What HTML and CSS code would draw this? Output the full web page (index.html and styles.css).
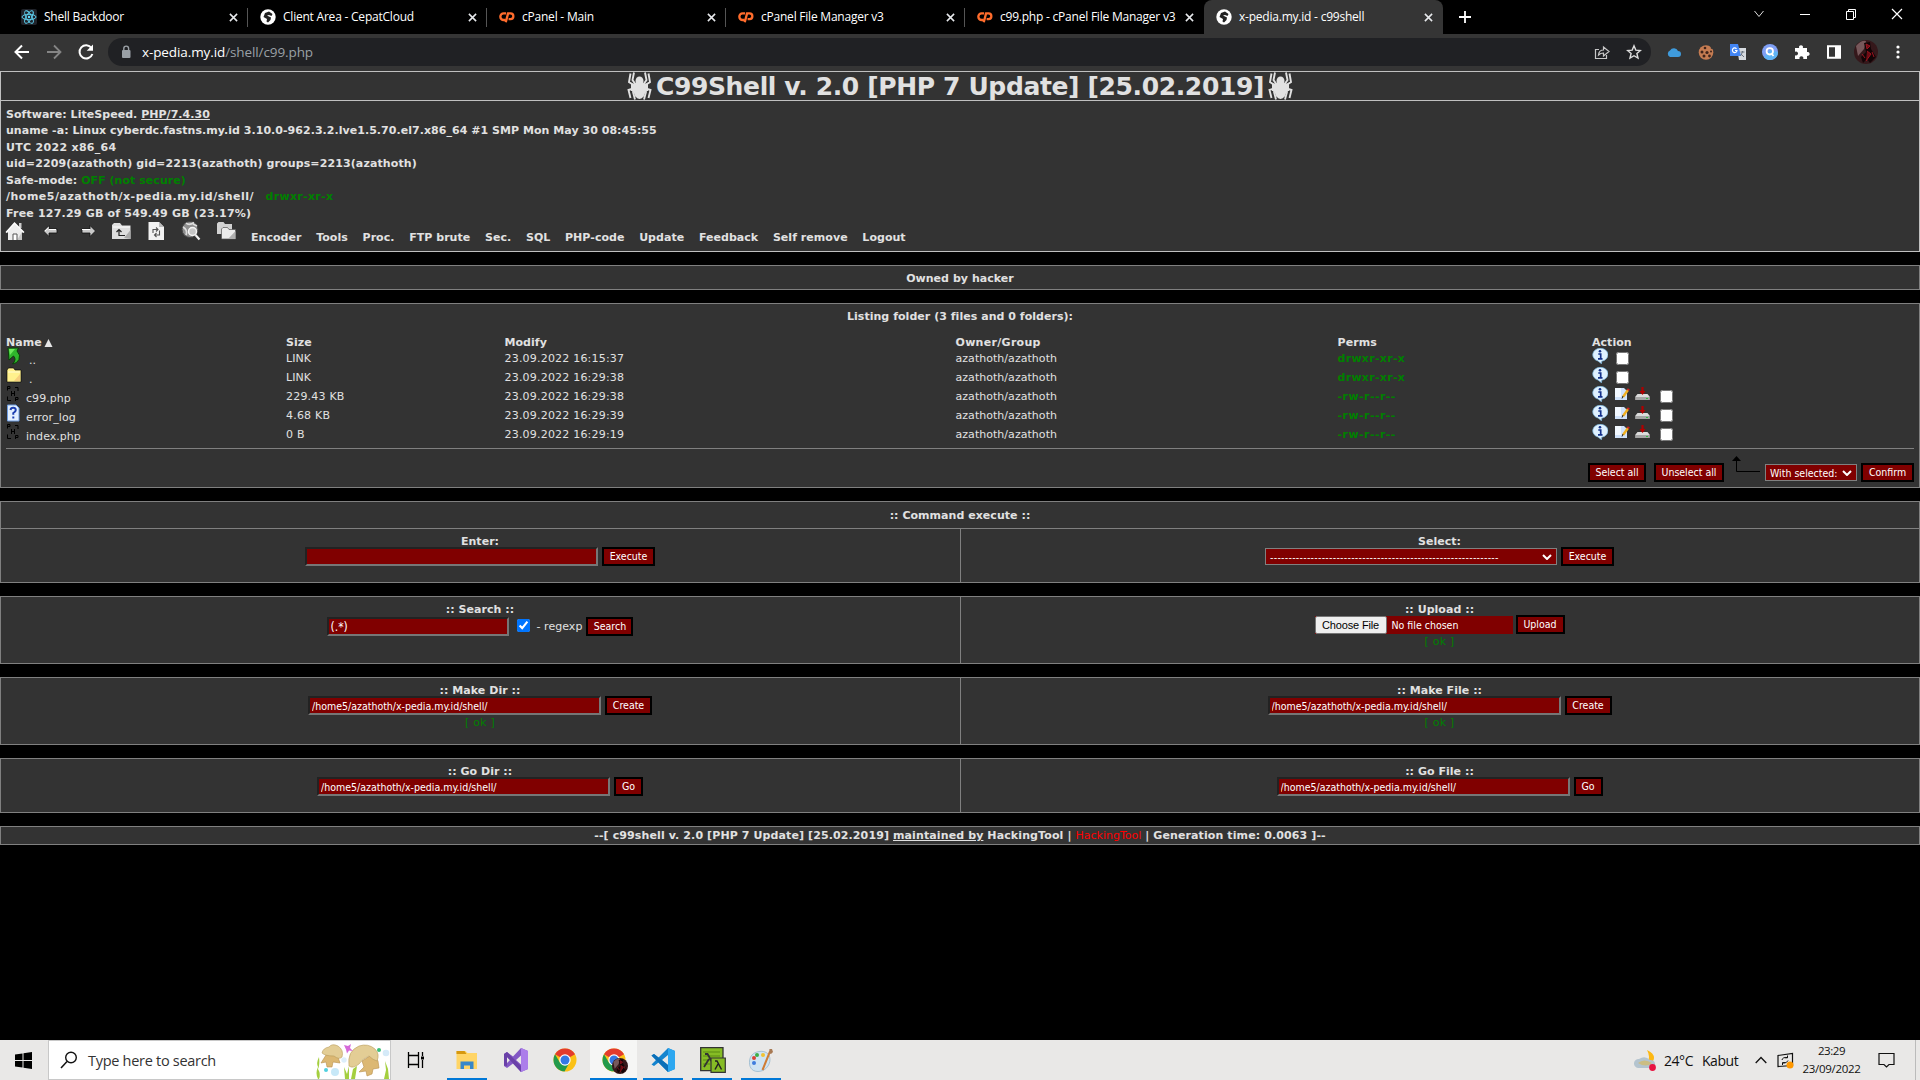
FILE: index.html
```html
<!DOCTYPE html>
<html lang="en">
<head>
<meta charset="utf-8">
<title>x-pedia.my.id - c99shell</title>
<link rel="stylesheet" href="styles.css">
</head>
<body>
<svg class="defs" aria-hidden="true">
  <symbol id="cp" viewBox="0 0 18 14"><path d="M8 3H5.2a3.3 3.3 0 0 0 0 7.4H7M7.600 13l2.600-10H13a3 3 0 0 1 0 6.300h-2.200" fill="none" stroke="#ff6c2c" stroke-width="2.600"/></symbol>
  <symbol id="globe" viewBox="0 0 16 16"><circle cx="8" cy="8" r="7.700" fill="#fff"/><path d="M5 4l4-1.500 3.500 2.500-1 2-2.500-1-2 .500 4 2-.500 2.500-2.500 2.500-1.500-1 .500-2.500-3.500-2z" fill="#222"/></symbol>
  <symbol id="x" viewBox="0 0 10 10"><path d="M1 1l8 8M9 1L1 9" stroke="#e8eaed" stroke-width="1.700"/></symbol>
  <symbol id="spider" viewBox="0 0 25 28"><g fill="none" stroke="#e1e1e1" stroke-width="1.900"><path d="M9 13L5.500 8 7 .5M8 14L2 10 3.500 1.500M8 16L1.500 18 3.500 26M9 18L6 20 8 27.500M16 13l3.500-5L18 .5M17 14l6-4-1.500-8.500M17 16l6.500 2-2 8M16 18l3 2-2 7.500"/></g><ellipse cx="12.500" cy="9" rx="4" ry="4.500" fill="#e1e1e1"/><ellipse cx="12.500" cy="18" rx="6" ry="9" fill="#e1e1e1"/><path d="M4 11.500h17v7.500H4z" fill="#e1e1e1"/></symbol>
  <symbol id="php" viewBox="0 0 14 18"><path d="M1.500 5.500v-4h2.500v2h-2.500M9 2.500h3V6M5.500 6v5M8.500 6v5M5.500 8.500h3M1.500 11.500v4H5M9.500 16v-3.500h2.500v2h-2.500" fill="none" stroke="#000"/></symbol>
  <symbol id="info" viewBox="0 0 16 16"><path d="M8 .3a7.500 6.500 0 0 1 1.700 12.900L9.500 15.800 6 13A7.500 6.500 0 0 1 8 .3z" fill="#dff1ff" stroke="#7db7e0" stroke-width=".7"/><path d="M6.300 6h2.400v4.500M6 10.800h4.500" fill="none" stroke="#12308a" stroke-width="1.700"/><circle cx="8" cy="3.300" r="1.300" fill="#12308a"/></symbol>
  <symbol id="edit" viewBox="0 0 16 14"><path d="M1 1h9l3 3v9H1z" fill="#cfe2fb"/><path d="M1 1h6v9H1z" fill="#f2f8ff"/><path d="M14 3l-5 7" stroke="#f0b020" stroke-width="2.400"/><path d="M14.800 1.800l-1 1.500" stroke="#c22" stroke-width="2.400"/><path d="M9 9l-1 2.500" stroke="#222"/></symbol>
  <symbol id="down" viewBox="0 0 15 14"><path d="M2.500 7h10l2 2.500v3.500H.5V9.500z" fill="#dcdcdc"/><path d="M.5 10h14v3H.5z" fill="#a5a5a5"/><path d="M11 11.500h2" stroke="#2fbf3f"/><path d="M7.500 0v5" stroke="#b00000" stroke-width="2.200"/><path d="M4.500 4h6L7.500 8z" fill="#b00000"/></symbol>
  <symbol id="chev" viewBox="0 0 10 6"><path d="M1 1l4 4 4-4" fill="none" stroke="#fff" stroke-width="2"/></symbol>
  <symbol id="chrome" viewBox="0 0 24 24"><circle cx="12" cy="12" r="11.500" fill="#fbc116"/><path d="M12 12L2 6.300A11.500 11.500 0 0 1 22 6.300z" fill="#e33b2e"/><path d="M2 6.300A11.500 11.500 0 0 0 11.500 23.500L16.500 14.500 7 14.800z" fill="#229a4b"/><circle cx="12" cy="12" r="5.700" fill="#fff"/><circle cx="12" cy="12" r="4.500" fill="#3578e5"/></symbol>
  <symbol id="avatar" viewBox="0 0 24 24"><circle cx="12" cy="12" r="12" fill="#35181b"/><path d="M2 6q5-6 10-5l-2 8-6 7z" fill="#77585b"/><path d="M10 3l6-1 1 7 5 8-6 6-3-4-4 4-2-6 5-5z" fill="#120406"/><path d="M12 4l4 2-3 3zM13 11l4 3-5 7M18 12l2 5M8 14l3 4" stroke="#9c1420" fill="#6d0c14"/></symbol>
</svg>

<header class="browser">
  <div class="tabs">
    <div class="tab"><svg class="fav" viewBox="0 0 16 16"><rect width="16" height="16" rx="2" fill="#20232a"/><g fill="none" stroke="#61dafb" stroke-width=".9"><ellipse cx="8" cy="8" rx="7" ry="2.700"/><ellipse cx="8" cy="8" rx="7" ry="2.700" transform="rotate(60 8 8)"/><ellipse cx="8" cy="8" rx="7" ry="2.700" transform="rotate(120 8 8)"/></g><circle cx="8" cy="8" r="1.200" fill="#61dafb"/></svg><span class="t">Shell Backdoor</span><svg class="cl"><use href="#x"/></svg></div>
    <div class="tab"><svg class="fav"><use href="#globe"/></svg><span class="t">Client Area - CepatCloud</span><svg class="cl"><use href="#x"/></svg></div>
    <div class="tab"><svg class="fav"><use href="#cp"/></svg><span class="t">cPanel - Main</span><svg class="cl"><use href="#x"/></svg></div>
    <div class="tab"><svg class="fav"><use href="#cp"/></svg><span class="t">cPanel File Manager v3</span><svg class="cl"><use href="#x"/></svg></div>
    <div class="tab nosep"><svg class="fav"><use href="#cp"/></svg><span class="t">c99.php - cPanel File Manager v3</span><svg class="cl"><use href="#x"/></svg></div>
    <div class="tab active"><svg class="fav"><use href="#globe"/></svg><span class="t">x-pedia.my.id - c99shell</span><svg class="cl"><use href="#x"/></svg></div>
    <svg class="plus" viewBox="0 0 12 12"><path d="M6 0v12M0 6h12" stroke="#fff" stroke-width="1.800"/></svg>
    <div class="win">
      <svg viewBox="0 0 12 12"><path d="M1.500 3l4.500 5.500L10.500 3" fill="none" stroke="#ddd"/></svg>
      <svg viewBox="0 0 12 12"><path d="M1 6.500h10" stroke="#fff"/></svg>
      <svg viewBox="0 0 12 12"><path d="M1.500 3.500h7v8h-7zM3.500 3V1.500h7v8H9" fill="none" stroke="#fff"/></svg>
      <svg viewBox="0 0 12 12"><path d="M1 1l10 10M11 1L1 11" stroke="#fff" stroke-width="1.200"/></svg>
    </div>
  </div>
  <div class="toolbar">
    <div class="nav">
      <svg viewBox="0 0 18 18"><path d="M16 9H3M9 2.500L2.500 9 9 15.500" fill="none" stroke="#fff" stroke-width="2"/></svg>
      <svg viewBox="0 0 18 18"><path d="M2 9h13M9 2.500L15.500 9 9 15.500" fill="none" stroke="#858585" stroke-width="1.800"/></svg>
      <svg viewBox="0 0 18 18"><path d="M14.500 5A6.600 6.600 0 1 0 15.400 11" fill="none" stroke="#fff" stroke-width="2"/><path d="M16 1.500v6.300H9.700z" fill="#fff"/></svg>
    </div>
    <div class="omni">
      <svg class="lock" viewBox="0 0 10 14"><rect x="1" y="5" width="8.500" height="8" rx="1" fill="#9aa0a6"/><path d="M2.800 5.500V3.500a2.400 2.400 0 0 1 4.800 0v2" fill="none" stroke="#9aa0a6" stroke-width="1.400"/></svg>
      <span class="url"><b>x-pedia.my.id</b>/shell/c99.php</span>
      <svg class="oi" viewBox="0 0 16 16"><path d="M5 5.500H1.500v9h11V11" fill="none" stroke="#c8c8c8" stroke-width="1.200"/><path d="M4.500 11q.5-5 5-5V3L15 7.500 9.500 12V9q-3 0-5 2z" fill="none" stroke="#c8c8c8" stroke-width="1.200"/></svg>
      <svg class="oi" viewBox="0 0 16 16"><path d="M8 1.800l1.800 4.300 4.600.4-3.500 3 1.100 4.600L8 11.700l-4 2.400 1.100-4.600-3.500-3 4.600-.4z" fill="none" stroke="#ddd" stroke-width="1.400"/></svg>
    </div>
    <div class="ext">
      <svg viewBox="0 0 16 16"><path d="M4 13a3.500 3.500 0 0 1 0-6.500A4.500 4.500 0 0 1 12 7a3 3 0 0 1 0 6z" fill="#3f9bdc"/></svg>
      <svg viewBox="0 0 16 16"><circle cx="8" cy="8.500" r="7.300" fill="#c57c52"/><path d="M12 0h4v4l-3 1z" fill="#353535"/><g fill="#40241b"><circle cx="7" cy="4" r="1.300"/><circle cx="4" cy="8" r="1.500"/><circle cx="9" cy="8.500" r="1.600"/><circle cx="6" cy="12" r="1.500"/><circle cx="11.500" cy="12" r="1.400"/><circle cx="13" cy="7.500" r="1"/></g></svg>
      <svg viewBox="0 0 16 16"><path d="M7 4h9v12H9z" fill="#d7dbe0"/><path d="M0 0h8l3 12H0z" fill="#4285f4"/><path d="M6.500 4.800A2.300 2.300 0 1 0 7 6.500H5" fill="none" stroke="#fff" stroke-width="1.200"/><path d="M10.500 8h4M12.500 7v1l-2 4M11 10l3 3" fill="none" stroke="#6b7580"/></svg>
      <svg viewBox="0 0 16 16"><circle cx="8" cy="8" r="8" fill="#7f9ff5"/><path d="M2 13.300A8 8 0 0 0 16 8L8 6z" fill="#5fb4f5"/><circle cx="7.800" cy="7.300" r="3.200" fill="none" stroke="#fff" stroke-width="1.800"/><path d="M9.500 9.500l2 2.500" stroke="#fff" stroke-width="1.800"/></svg>
      <svg viewBox="0 0 16 16"><path d="M1 4h4.200a2 2 0 1 1 3.600 0H13v4a2 2 0 1 1 0 3.800V15H9.200a2 2 0 1 0-3.600 0H1v-3.800a2 2 0 1 0 0-3.400z" fill="#fff"/></svg>
      <svg viewBox="0 0 16 16"><path d="M2 2.200h12v11.600H2z" fill="none" stroke="#fff" stroke-width="2"/><path d="M9 2h5v12H9z" fill="#fff"/></svg>
      <svg class="ava"><use href="#avatar"/></svg>
      <svg viewBox="0 0 16 16"><g fill="#fff"><circle cx="8" cy="3" r="1.600"/><circle cx="8" cy="8" r="1.600"/><circle cx="8" cy="13" r="1.600"/></g></svg>
    </div>
  </div>
</header>

<main class="page">
  <section class="titlebar"><svg class="spider"><use href="#spider"/></svg><h1>C99Shell v. 2.0 [PHP 7 Update] [25.02.2019]</h1><svg class="spider"><use href="#spider"/></svg></section>
  <section class="info">
    <p>Software: LiteSpeed. <u>PHP/7.4.30</u></p>
    <p>uname -a: Linux cyberdc.fastns.my.id 3.10.0-962.3.2.lve1.5.70.el7.x86_64 #1 SMP Mon May 30 08:45:55</p>
    <p class="ls3">UTC 2022 x86_64</p>
    <p class="ls1">uid=2209(azathoth) gid=2213(azathoth) groups=2213(azathoth)</p>
    <p>Safe-mode: <i>OFF (not secure)</i></p>
    <p><span class="ls5">/home5/azathoth/x-pedia.my.id/shell/</span><i class="perm ls3">drwxr-xr-x</i></p>
    <p class="ls2">Free 127.29 GB of 549.49 GB (23.17%)</p>
    <div class="quick">
      <div class="cell c0"><svg viewBox="0 0 20 20"><path d="M3 10h14v9H3z" fill="#ececec"/><path d="M14 2h2.500v5H14z" fill="#ccc"/><path d="M1 11.500L9.500 2 19 11.500" fill="#eee" stroke="#fff" stroke-width="1.300"/><path d="M12 19l5-8v8z" fill="#c4c4c4"/><path d="M8 19v-6h4v6" fill="#fff" stroke="#555"/></svg></div>
      <div class="cell"><svg viewBox="0 0 20 20"><path d="M2.500 10L8 4.500v3.500h8v4H8v3.500z" fill="#c9c9c9" stroke="#111" stroke-width=".8"/><path d="M4 10l4-3.500M8 8.500h7" stroke="#fff"/></svg></div>
      <div class="cell"><svg viewBox="0 0 20 20"><path d="M19.500 10L14 4.500v3.500H6v4h8v3.500z" fill="#c9c9c9" stroke="#111" stroke-width=".8"/><path d="M6 8.500h8" stroke="#fff"/></svg></div>
      <div class="cell"><svg viewBox="0 0 20 20"><path d="M1 18V4l2-2h6l2 2.500h8.500V18z" fill="#dedede"/><path d="M2 6h17" stroke="#fff"/><path d="M13 17L19.500 9v9z" fill="#aaa"/><path d="M8 8.500v6h6M5.500 11L8 8.500l2.500 2.500" fill="none" stroke="#222" stroke-width="1.200"/></svg></div>
      <div class="cell"><svg viewBox="0 0 20 20"><path d="M2.500 1H13l5 5v13H2.500z" fill="#f2f2f2"/><path d="M13 1v5h5" fill="#bbb"/><path d="M7 12V8.500h5M10 6.500l2 2-2 2M13.500 9.500V14h-5M10.500 12l-2 2 2 2" fill="none" stroke="#555" stroke-width="1.100"/></svg></div>
      <div class="cell"><svg viewBox="0 0 20 20"><circle cx="9" cy="8.500" r="8" fill="#8e8e8e" stroke="#444"/><path d="M2 6q5 3 3 8M5 2q3 3 8-.5M12 3l4 2" fill="none" stroke="#ddd" stroke-width="1.600"/><circle cx="11.500" cy="10.500" r="4" fill="#c6c6c6" stroke="#f4f4f4" stroke-width="1.500"/><path d="M14.500 14l4 4.500" stroke="#f4f4f4" stroke-width="2.200"/></svg></div>
      <div class="cell"><svg viewBox="0 0 20 20"><path d="M1 13V2.500l1.500-1.500h5l1.500 2h7v10z" fill="#d2d2d2"/><path d="M5.500 18V8L7 6.500h4.500L13 8.500h6.500V18z" fill="#ececec" stroke="#555" stroke-width=".7"/><path d="M12 18l7.500-8v8z" fill="#b0b0b0"/></svg></div>
      <nav><a>Encoder</a><a>Tools</a><a>Proc.</a><a>FTP brute</a><a>Sec.</a><a>SQL</a><a>PHP-code</a><a>Update</a><a>Feedback</a><a>Self remove</a><a>Logout</a></nav>
    </div>
  </section>

  <section class="box owned"><b>Owned by hacker</b></section>

  <section class="box listing">
    <h2>Listing folder (3 files and 0 folders):</h2>
    <div class="row head"><span class="nm0"><b>Name</b><svg viewBox="0 0 9 9"><path d="M4.500 0L9 9H0z" fill="#e6e6e6"/></svg></span><b>Size</b><b>Modify</b><b class="ls3">Owner/Group</b><b class="ls1">Perms</b><b>Action</b></div>
    <div class="row"><span class="nm up"><svg viewBox="0 0 16 18"><path d="M2 1h10.500L11 4q4 4 2 8.500-2 4-6.500 4.500 4.500-4.500 1-8L3 13z" fill="#2fb62c" stroke="#0a3d08"/><path d="M3 2h6L4 8z" fill="#6ee85c"/></svg><em>..</em></span><span>LINK</span><span class="ls2">23.09.2022 16:15:37</span><span>azathoth/azathoth</span><i class="ls3">drwxr-xr-x</i><span class="act"><svg><use href="#info"/></svg><input type="checkbox"></span></div>
    <div class="row"><span class="nm up"><svg viewBox="0 0 16 18"><path d="M1 16V4l1.500-2h5L9 4h6v12z" fill="#fff18d" stroke="#000" stroke-width=".6"/><path d="M2 6h12" stroke="#fffbd5"/><path d="M8 15l6-7v7z" fill="#f6cf7d"/></svg><em>.</em></span><span>LINK</span><span class="ls2">23.09.2022 16:29:38</span><span>azathoth/azathoth</span><i class="ls3">drwxr-xr-x</i><span class="act"><svg><use href="#info"/></svg><input type="checkbox"></span></div>
    <div class="row"><span class="nm"><svg><use href="#php"/></svg><em>c99.php</em></span><span class="ls2">229.43 KB</span><span class="ls2">23.09.2022 16:29:38</span><span>azathoth/azathoth</span><i class="ls4">-rw-r--r--</i><span class="act"><svg><use href="#info"/></svg><svg><use href="#edit"/></svg><svg class="dl"><use href="#down"/></svg><input type="checkbox"></span></div>
    <div class="row"><span class="nm"><svg viewBox="0 0 14 18"><path d="M1.500 1H10l3 3v13H1.500z" fill="#e3f0ff" stroke="#6d9be0"/><path d="M4.500 6q.3-2.300 2.700-2.300T9.800 6q0 1.600-2.500 3v1.800M7.300 12.500v2" fill="none" stroke="#1c3fb0" stroke-width="2"/></svg><em class="ls1">error_log</em></span><span class="ls2">4.68 KB</span><span class="ls2">23.09.2022 16:29:39</span><span>azathoth/azathoth</span><i class="ls4">-rw-r--r--</i><span class="act"><svg><use href="#info"/></svg><svg><use href="#edit"/></svg><svg class="dl"><use href="#down"/></svg><input type="checkbox"></span></div>
    <div class="row"><span class="nm"><svg><use href="#php"/></svg><em>index.php</em></span><span class="ls2">0 B</span><span class="ls2">23.09.2022 16:29:19</span><span>azathoth/azathoth</span><i class="ls4">-rw-r--r--</i><span class="act"><svg><use href="#info"/></svg><svg><use href="#edit"/></svg><svg class="dl"><use href="#down"/></svg><input type="checkbox"></span></div>
    <div class="bulk">
      <button class="w58">Select all</button><button class="w70">Unselect all</button>
      <svg class="arrow" viewBox="0 0 28 17"><path d="M4.500 4v11.500H28" fill="none" stroke="#000"/><path d="M0 5L4.500 0 9 5z"/></svg>
      <span class="select w92">With selected:<svg><use href="#chev"/></svg></span><button class="w53">Confirm</button>
    </div>
  </section>

  <section class="box cmd">
    <h2>:: Command execute ::</h2>
    <div class="halves">
      <div class="half"><h3>Enter:</h3><div class="line"><input class="w293"><button class="w53">Execute</button></div></div>
      <div class="half"><h3>Select:</h3><div class="line"><span class="select w292"><span class="dashes">--------------------------------------------------------------</span><svg><use href="#chev"/></svg></span><button class="w53">Execute</button></div></div>
    </div>
  </section>

  <section class="box halves h68">
    <div class="half"><h3>:: Search ::</h3><div class="line search"><input class="w182" value="(.*)"><input type="checkbox" checked><em>- regexp</em><button class="w47">Search</button></div></div>
    <div class="half"><h3>:: Upload ::</h3><div class="line upload"><span class="file"><span class="choose">Choose File</span>No file chosen</span><button class="w49">Upload</button></div><div class="ok">[ ok ]</div></div>
  </section>

  <section class="box halves h68">
    <div class="half"><h3>:: Make Dir ::</h3><div class="line"><input class="w293" value="/home5/azathoth/x-pedia.my.id/shell/"><button class="w47">Create</button></div><div class="ok">[ ok ]</div></div>
    <div class="half"><h3>:: Make File ::</h3><div class="line"><input class="w293" value="/home5/azathoth/x-pedia.my.id/shell/"><button class="w47">Create</button></div><div class="ok">[ ok ]</div></div>
  </section>

  <section class="box halves h55">
    <div class="half"><h3>:: Go Dir ::</h3><div class="line"><input class="w293" value="/home5/azathoth/x-pedia.my.id/shell/"><button class="w29">Go</button></div></div>
    <div class="half"><h3>:: Go File ::</h3><div class="line"><input class="w293" value="/home5/azathoth/x-pedia.my.id/shell/"><button class="w29">Go</button></div></div>
  </section>

  <footer class="box foot"><b>--[ c99shell v. 2.0 [PHP 7 Update] [25.02.2019] <u>maintained by</u> HackingTool | <span class="red">HackingTool</span> | Generation time: 0.0063 ]--</b></footer>
</main>

<footer class="taskbar">
  <div class="start"><svg viewBox="0 0 17 17"><path d="M0 2.500l7.500-1V8H0zM8.500 1.300L17 0v8H8.500zM0 9h7.500v6.500L0 14.500zM8.500 9H17v8l-8.500-1.200z"/></svg></div>
  <div class="find"><svg class="mag" viewBox="0 0 18 18"><circle cx="11" cy="6.500" r="5.300" fill="none" stroke="#111" stroke-width="1.400"/><path d="M7 10.500L1 17" stroke="#111" stroke-width="1.500"/></svg><span>Type here to search</span>
    <svg class="art" viewBox="0 0 78 38"><circle cx="23" cy="31" r="4" fill="#c7e8f8"/><circle cx="14" cy="29" r="2" fill="#4fd0e0"/><circle cx="32" cy="19" r="2.700" fill="#dceefa"/><circle cx="74" cy="12" r="3.300" fill="#d5eaf8"/><circle cx="67" cy="9" r="2" fill="#3bbf78"/><path d="M6 38q-3-6 0-12-2-4 1-10 1 8-1 12 3 5 1 10zM33 38l-1-12 3 7 2-8 0 13zM39 38l2-10 4-3-2 13zM72 38l2-9-1-9 3 8 1 10z" fill="#a4cf3f"/><path d="M14 14l-5 8 5-1 1 5 5 0 1-5 7 1-2-6-5-4z" fill="#dcb873" stroke="#b8904e" stroke-width=".6"/><path d="M50 20l2 6-5 5 7-1 1 5 5-2 1-5 6-1-1-7-5-7z" fill="#dcb873" stroke="#b8904e" stroke-width=".6"/><path d="M17 6Q20 2 26 5q6 4 4 11-3 3-8-1-9 0-12-3 1-5 7-6z" fill="#e3cd95" stroke="#b99c5c" stroke-width=".6"/><path d="M37 25Q35 10 47 5q9-3 16 3 5 5 2 12-4-1-8-5-6 2-10 8-6 5-10 2z" fill="#e3cd95" stroke="#b99c5c" stroke-width=".6"/><path d="M32 4l4 1 3-2-1 4 3 3-4-.5-2 3-1-4z" fill="#d569d8"/></svg>
  </div>
  <div class="app tv"><svg viewBox="0 0 18 18"><path d="M1.500 1v3.500h10V1M1.500 17v-3.500h10V17M1.500 4.500v9M11.500 4.500v9M15.500 1v4M15.500 9v8" fill="none" stroke="#000" stroke-width="1.300"/><path d="M14 5.500h3v3h-3z"/></svg></div>
  <div class="app run"><svg viewBox="0 0 24 24"><path d="M1.500 3h9l2 2H22v16H1.500z" fill="#ffd567"/><path d="M1.500 3h8l2 3H1.500z" fill="#d6980f"/><path d="M5.500 21v-7.500h13V21h-3.500v-3.500H9V21z" fill="#3787c9"/></svg></div>
  <div class="app"><svg viewBox="0 0 24 24"><path fill-rule="evenodd" d="M17 0l7 3v18l-7 3-8-8.500L3 20l-3-2V6l3-2 6 4.500zM17 7.500L12 12l5 4.500zM3 9v6l3-3z" fill="#8257c4"/><path d="M17 0l7 3v18l-7 3z" fill="#ac7eea"/><path d="M0 6l3-2 14 14v6L3 9v9l-3-.500z" fill="#6a41a8"/></svg></div>
  <div class="app"><svg><use href="#chrome"/></svg></div>
  <div class="app on"><svg><use href="#chrome"/></svg><svg class="badge" viewBox="0 0 24 24"><use href="#avatar"/></svg></div>
  <div class="app run"><svg viewBox="0 0 24 24"><path fill-rule="evenodd" d="M17 0l7 3v18l-7 3-9.500-9.500L3 18l-2.500-1.500L5 12 .5 7.500 3 6l4.500 3.500zM17 7l-6 5 6 5z" fill="#1484cf"/><path d="M.5 7.500L3 6l14 11v7z" fill="#0b6fb8"/><path d="M17 0l7 3v18l-7 3z" fill="#2da7f0"/></svg></div>
  <div class="app run lm"><svg viewBox="0 0 26 26"><path d="M.7.700H23v23H.7z" fill="#86bc25" stroke="#333" stroke-width="1.300"/><path d="M3 5h17M3 9h17M3 13h8M3 17h7" stroke="#5b8b12"/><path d="M5 7h2.500L15 20M9 12l-5 8" stroke="#333" fill="none" stroke-width="1.800"/><path d="M11 11h14.300v14.300H11z" fill="#86bc25" stroke="#333" stroke-width="1.200"/><path d="M15 14h2l4.500 8.500M18 17l-3 5.500" stroke="#222" fill="none" stroke-width="1.500"/></svg></div>
  <div class="app run"><svg viewBox="0 0 24 24"><path d="M10 3.500c6-1 11 2 11 8s-5 12-12 12S0 18 .5 13 4 4.500 10 3.500z" fill="#cfe4f2" stroke="#8fb2c8" stroke-width=".7"/><circle cx="5" cy="10" r="2" fill="#db4437"/><circle cx="8" cy="7" r="2" fill="#3fae49"/><circle cx="14" cy="7" r="2" fill="#f1c232"/><circle cx="5" cy="15" r="2" fill="#3e7ddd"/><path d="M21 3.500L13.500 22" stroke="#cf7d35" stroke-width="2"/><path d="M20 5l.5-4L23 1l1 3-2 2z" fill="#a87953"/></svg></div>
  <div class="tray">
    <svg class="wx" viewBox="0 0 22 22"><path d="M13 1q7 3 7 8t-7 5q4-6 0-13z" fill="#fdb813"/><path d="M4 19a4.500 4.500 0 0 1 1-9q6-4 11 1 5 0 5 4t-4 4z" fill="#b4c4cf"/><path d="M4 14q6-5 14 0-6 5-14 0z" fill="#cbbd83"/><circle cx="18.500" cy="18.500" r="3.400" fill="#e81442"/></svg>
    <span class="temp">24°C</span><span class="kab">Kabut</span>
    <svg class="upc" viewBox="0 0 12 8"><path d="M.7 7L6 1.500 11.300 7" fill="none" stroke="#111" stroke-width="1.300"/></svg>
    <svg class="upd" viewBox="0 0 17 17"><path d="M1 3.500L15.500 1.500v12L1 14.500z" fill="none" stroke="#111" stroke-width="1.200"/><path d="M5 8q.5-3 5.500-2.500M10.500 3.500v2.300H8M11 8.500q-1 3-5.500 2.500M5.500 13v-2.300H8" fill="none" stroke="#111"/><circle cx="13" cy="13" r="3.500" fill="#ff9800"/></svg>
    <div class="clock"><span class="time">23:29</span><span>23/09/2022</span></div>
    <svg class="note" viewBox="0 0 17 17"><path d="M1 1.500h15v11h-5L8.500 15 6 12.500H1z" fill="none" stroke="#111" stroke-width="1.200"/></svg>
    <span class="peek"></span>
  </div>
</footer>
</body>
</html>
```
FILE: styles.css
```css
* { box-sizing: border-box; }
body { margin: 0; width: 1920px; height: 1080px; overflow: hidden; background: #000; display: flex; flex-direction: column; font-family: "DejaVu Sans", Verdana, sans-serif; font-size: 11px; letter-spacing: .04px; color: #e1e1e1; }
svg { display: block; flex: none; }
em, i { font-style: normal; }
h1, h2, h3, p { margin: 0; }
.defs { position: absolute; width: 0; height: 0; }
.ls1 { letter-spacing: .11px; }
.ls2 { letter-spacing: .2px; }
.ls3 { letter-spacing: .3px; }
.ls4 { letter-spacing: .45px; }
.ls5 { letter-spacing: .5px; }

.browser { height: 71px; flex: none; background: #353535; font-family: "Open Sans", "Noto Sans", sans-serif; }
.tabs { height: 34px; background: #000; display: flex; align-items: center; padding-left: 8.500px; }
.tab { width: 239px; height: 34px; display: flex; align-items: center; padding: 0 10px 0 12px; color: #fff; font-size: 12px; letter-spacing: -.22px; position: relative; }
.tab .t { flex: none; white-space: nowrap; margin-top: -1px; }
.tab::after { content: ""; position: absolute; right: 0; top: 8px; width: 1px; height: 19px; background: #555; }
.tab.nosep::after, .tab.active::after { display: none; }
.tab.active { background: #353535; border-radius: 8px 8px 0 0; }
.fav { width: 16px; height: 16px; margin-right: 7.500px; }
.cl { width: 9px; height: 9px; margin-left: auto; }
.plus { width: 12px; height: 12px; margin-left: 16.500px; }
.win { margin-left: auto; display: flex; gap: 34px; padding: 0 17px 6px 0; }
.win svg { width: 12px; height: 12px; }
.toolbar { height: 36px; display: flex; align-items: center; }
.nav { display: flex; width: 108px; gap: 14px; padding-left: 13px; }
.nav svg { width: 18px; height: 18px; }
.omni { width: 1543px; height: 28px; border-radius: 14px; background: #202124; display: flex; align-items: center; padding: 0 9px 0 13px; font-size: 13.500px; letter-spacing: -.1px; color: #9aa0a6; }
.lock { width: 10px; height: 14px; margin-right: 11px; }
.url { white-space: nowrap; margin-right: auto; }
.url b { font-weight: 400; color: #fff; }
.oi { width: 16px; height: 16px; margin-left: 16px; }
.ext { display: flex; align-items: center; gap: 16px; padding-left: 15px; }
.ext svg { width: 16px; height: 16px; }
.ext .ava { width: 24px; height: 24px; margin: 0 -4px; }

.page { flex: 1; display: flex; flex-direction: column; }
.titlebar { height: 30px; background: #333; border: 1px solid #c0c0c0; display: flex; align-items: center; justify-content: center; gap: 4px; }
.titlebar h1 { font-size: 25px; line-height: 30px; letter-spacing: -.370px; white-space: nowrap; padding-top: 1px; }
.spider { width: 25px; height: 28px; }
.info { height: 151px; background: #333; border: 1px solid #c0c0c0; border-top: 0; padding: 5.500px 5px 0; font-weight: 700; }
.info p { height: 16.500px; line-height: 16.500px; white-space: nowrap; }
.info i, .row i { color: #008000; font-weight: 700; }
.perm { margin-left: 11.500px; }
.quick { display: flex; height: 28px; margin-left: -5px; margin-top: -1.500px; }
.cell { width: 35px; display: flex; justify-content: center; }
.cell.c0 { width: 32px; padding-right: 4px; }
.cell svg { width: 20px; height: 20px; }
.quick nav { display: flex; gap: 14.700px; margin-left: 8px; padding-top: 9px; line-height: 16px; white-space: nowrap; }

.box { background: #333; border: 1px solid #808080; margin-top: 13px; flex: none; }
.owned { height: 25px; display: flex; align-items: center; justify-content: center; padding-top: 1px; }
.listing { height: 185px; padding: 0 5px; }
.listing h2, .cmd h2, .half h3 { font-size: inherit; text-align: center; }
.listing h2 { height: 31px; line-height: 26px; }
.row { display: grid; grid-template-columns: 280px 218.500px 451px 382px 254.500px 1fr; height: 19px; line-height: 22px; white-space: nowrap; align-items: start; }
.row.head { height: 13px; line-height: 16px; }
.nm0 { display: flex; align-items: center; gap: 2px; }
.nm0 svg { width: 9px; height: 8px; }
.nm { display: flex; }
.nm svg { width: 14px; height: 18px; margin-right: 6px; margin-top: -1px; }
.nm.up svg { width: 16px; margin-right: 7px; }
.nm em { line-height: 26px; }
.act { display: flex; align-items: center; height: 18px; }
.act svg { width: 16px; height: 16px; margin-right: 6px; margin-top: -3px; }
.act svg.dl { height: 14px; width: 15px; margin-right: 8px; margin-left: -1px; }
.act input { width: 13px; height: 13px; margin: 2px 0 0 2px; }
.bulk { border-top: 1px solid #808080; height: 38px; margin-top: 5px; padding-top: 14px; display: flex; justify-content: flex-end; }
button, .select, input, .file { font-family: "DejaVu Sans Condensed", "DejaVu Sans", sans-serif; font-stretch: condensed; font-size: 10.500px; letter-spacing: 0; color: #fff; background: #800000; padding: 0; margin: 0; white-space: nowrap; }
button { height: 19px; border: 2px solid #000; line-height: 15px; flex: none; }
.select { height: 17px; border: 1px solid #808080; display: flex; align-items: center; justify-content: space-between; padding: 0 4px; flex: none; }
.select svg { width: 10px; height: 6px; }
.dashes { letter-spacing: .280px; }
.w29 { width: 29px; } .w47 { width: 47px; } .w49 { width: 49px; } .w53 { width: 53px; }
.w58 { width: 58px; } .w70 { width: 70px; } .w92 { width: 92px; } .w182 { width: 182px; }
.w292 { width: 292px; } .w293 { width: 293px; }
.bulk .w58 { margin-right: 8px; }
.bulk .w92 { margin: 1px 4px 0 5px; }
.arrow { width: 28px; height: 17px; margin: -7px 0 0 8px; }

.cmd { height: 82px; }
.cmd h2 { height: 26px; line-height: 27px; }
.halves { display: grid; grid-template-columns: 959px 1fr; }
.cmd .halves { height: 54px; border-top: 1px solid #808080; }
.h68 { height: 68px; }
.h55 { height: 55px; }
.half { padding: 5px 1px 0 0; text-align: center; }
.half + .half { border-left: 1px solid #808080; }
.half h3 { height: 13px; line-height: 15px; }
.line { display: flex; justify-content: center; align-items: center; gap: 4px; height: 19px; }
.half input:not([type]) { height: 19px; border: 2px solid; border-color: #222 #767676 #767676 #222; padding: 0 2px; }
.line input.w182 { font-size: 12px; }
.search { margin-top: 2px; }
.search input[type=checkbox] { width: 13px; height: 13px; margin: -3px 3px 0 4px; }
.upload { gap: 3px; }
.file { width: 198px; height: 18px; display: flex; align-items: center; gap: 5px; }
.choose { width: 72px; height: 18px; background: #efefef; border: 1px solid #767676; border-radius: 2px; color: #000; font-family: "Liberation Sans", Arial, sans-serif; font-size: 11px; letter-spacing: -.15px; line-height: 16px; }
.ok { color: #008000; line-height: 16px; letter-spacing: .25px; }
.foot { height: 19px; text-align: center; line-height: 17px; letter-spacing: .110px; }
.red { color: #f00; font-weight: 400; letter-spacing: 0; }

.taskbar { height: 40px; flex: none; background: #e9e8e7; display: flex; font-family: "Open Sans", "Noto Sans", sans-serif; color: #111; }
.start { width: 48px; padding: 12px 0 0 15px; }
.start svg { width: 17px; height: 17px; }
.find { width: 343px; background: #fff; border: 1px solid #c8c8c8; display: flex; align-items: center; padding-left: 11px; font-size: 14.500px; letter-spacing: -.290px; color: #333; white-space: nowrap; }
.mag { width: 18px; height: 18px; margin-right: 10px; }
.art { width: 78px; height: 38px; margin-left: auto; }
.app { display: flex; align-items: center; justify-content: center; position: relative; width: 40px; margin-right: 9px; }
.app svg { width: 24px; height: 24px; }
.app.tv { width: 50px; margin-right: 6px; }
.app.tv svg { width: 18px; height: 18px; }
.app.run { border-bottom: 2px solid #0078d7; padding-top: 2px; }
.app.on { width: 47px; margin-right: 6px; margin-left: -4px; background: #f6f6f5; border-bottom: 2px solid #0078d7; padding-top: 2px; }
.app .badge { position: absolute; width: 16px; height: 16px; left: 22px; top: 18px; }
.app.lm svg { width: 26px; height: 26px; margin-left: 2px; }
.tray { margin-left: auto; display: flex; align-items: center; font-size: 14px; letter-spacing: -.450px; white-space: nowrap; }
.wx { width: 22px; height: 22px; margin-right: 8px; }
.temp { width: 38px; }
.kab { width: 53px; }
.upc { width: 12px; height: 8px; margin-right: 10px; }
.upd { width: 17px; height: 17px; margin-right: 8px; }
.clock { width: 59px; font-size: 11.500px; line-height: 18px; letter-spacing: -.3px; display: flex; flex-direction: column; align-items: center; }
.time { letter-spacing: -.450px; }
.note { width: 17px; height: 17px; margin-left: 17px; }
.peek { width: 5px; height: 40px; margin-left: 20px; border-left: 1px solid #bbb; }
```
